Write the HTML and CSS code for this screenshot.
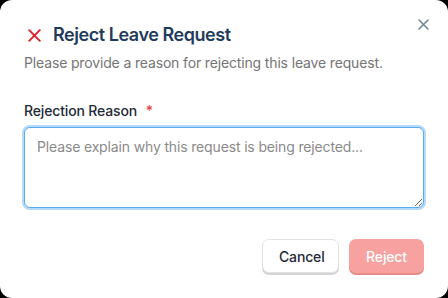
FILE: index.html
```html
<!DOCTYPE html>
<html>
<head>
<meta charset="utf-8">
<link rel="stylesheet" href="styles.css">
</head>
<body>
<div class="dialog">
  <button class="close" aria-label="Close">
    <svg width="11" height="11" viewBox="0 0 11 11"><path d="M1 1L10 10M10 1L1 10" stroke="#6b7f96" stroke-width="1.5" stroke-linecap="round"/></svg>
  </button>
  <div class="header">
    <svg class="xicon" width="13" height="13" viewBox="0 0 13 13"><path d="M1.2 1.2L11.8 11.8M11.8 1.2L1.2 11.8" stroke="#e11d2a" stroke-width="1.9" stroke-linecap="round"/></svg>
    <h2 class="title">Reject Leave Request</h2>
  </div>
  <p class="desc">Please provide a reason for rejecting this leave request.</p>
  <label class="label">Rejection Reason <span class="req">*</span></label>
  <textarea class="input" placeholder="Please explain why this request is being rejected..."></textarea>
  <div class="actions">
    <button class="btn cancel">Cancel</button>
    <button class="btn reject">Reject</button>
  </div>
</div>
</body>
</html>
```
FILE: styles.css
```css
html, body {
  margin: 0;
  padding: 0;
  background: #000;
  width: 448px;
  height: 298px;
  overflow: hidden;
}
.dialog {
  position: relative;
  box-sizing: border-box;
  width: 448px;
  height: 298px;
  background: #fff;
  border-radius: 12px;
  padding: 23px 24px 24px;
  font-family: Inter, "Noto Sans", sans-serif;
  display: flex;
  flex-direction: column;
  letter-spacing: -0.15px;
}
.close {
  position: absolute;
  top: 19px;
  right: 19px;
  width: 11px;
  height: 11px;
  padding: 0;
  border: 0;
  background: none;
  display: flex;
}
.header {
  display: flex;
  align-items: center;
  gap: 12px;
  padding-left: 4px;
}
.xicon { flex: none; }
.title {
  margin: 0;
  font-size: 18px;
  font-weight: 600;
  color: #1f3b5c;
  line-height: 24px;
  letter-spacing: -0.45px;
}
.desc {
  margin: 6px 0 0;
  font-size: 14px;
  color: #757575;
  line-height: 20px;
}
.label {
  margin-top: 28px;
  font-size: 14px;
  font-weight: 500;
  color: #1f2937;
  line-height: 20px;
}
.req {
  color: #e53e3e;
  margin-left: 5px;
}
.input {
  margin-top: 6px;
  box-sizing: border-box;
  width: 400px;
  height: 81px;
  border: 1px solid #5aaaf0;
  border-radius: 6px;
  box-shadow: 0 0 0 2px #b3d9fb;
  padding: 9px 12px;
  font-family: inherit;
  font-size: 14px;
  line-height: 20px;
  letter-spacing: -0.15px;
  color: #1f2937;
  outline: none;
  resize: vertical;
}
.input::placeholder { color: #8a8a8a; }
.actions {
  margin-top: auto;
  display: flex;
  justify-content: flex-end;
  gap: 10px;
  padding-bottom: 1px;
}
.btn {
  height: 34px;
  border-radius: 7px;
  font-family: inherit;
  font-size: 14px;
  font-weight: 500;
  letter-spacing: -0.15px;
  padding: 0 16px;
}
.cancel {
  width: 77px;
  background: #fff;
  color: #1f2937;
  border: 1px solid #e2e2e2;
  box-shadow: 0 2px 0 #d4d4d8;
}
.reject {
  width: 75px;
  background: #f7a1a1;
  color: #fff;
  border: 0;
  box-shadow: 0 2px 0 #e68a8a;
}
```
